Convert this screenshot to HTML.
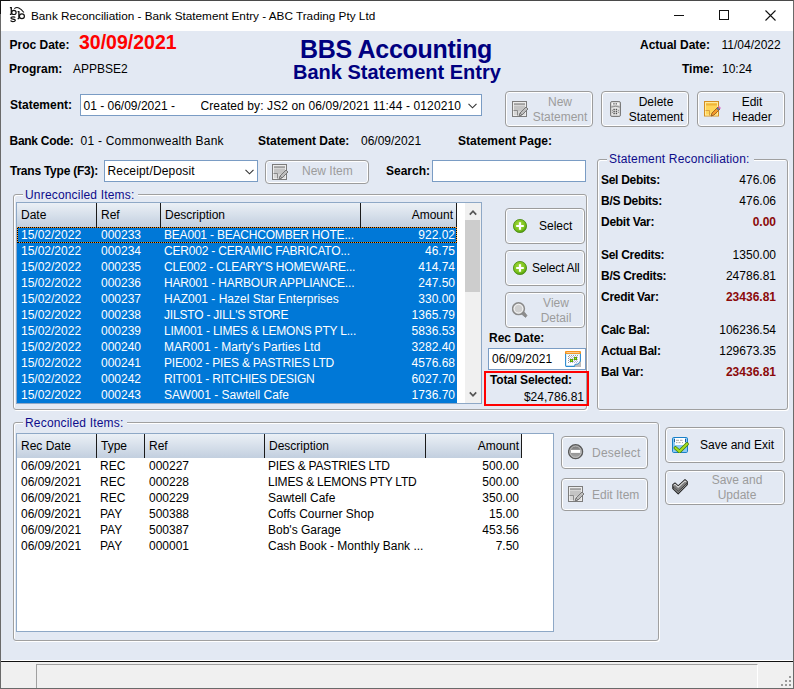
<!DOCTYPE html>
<html><head><meta charset="utf-8">
<style>
*{box-sizing:border-box}
html,body{margin:0;padding:0}
body{width:794px;height:689px;overflow:hidden;position:relative;background:#E3E9F3;font-family:"Liberation Sans",sans-serif;font-size:12px;color:#000}
.a{position:absolute}
.t{position:absolute;white-space:nowrap;line-height:14px}
.b{font-weight:bold}
.ctr{text-align:center}
#win{position:absolute;left:0;top:0;width:794px;height:689px;border:1px solid #6a6a6a;border-top-color:#4a4a4a}
#title{position:absolute;left:0;top:0;width:794px;height:31px;background:#fff}
.btn{position:absolute;border:1px solid #9c9c9c;border-radius:4px;box-shadow:inset 0 0 0 1px #fff}
.dis{color:#9c9c9c}
.grp{position:absolute;border:1px solid #a0a0a0;border-radius:3px;box-shadow:inset 1px 1px 0 #fff,1px 1px 0 #fff}
.glab{position:absolute;color:#0e0c8a;background:#E3E9F3;padding:0 4px 0 2px;letter-spacing:0.18px;line-height:14px;white-space:nowrap}
.inp{position:absolute;background:#fff;border:1px solid #7a9cc4}
.grid{position:absolute;background:#fff;border:1px solid #8ea8c6;overflow:hidden}
.hdr{position:absolute;left:0;top:0;height:24px;background:linear-gradient(#ebf0f6,#c2cfdf)}
.sep{position:absolute;top:0;width:1px;height:24px;background:#1a1a1a}
.row{position:absolute;height:16px;background:#0078d7;color:#fff}
.row2{position:absolute;left:0;height:16px;width:530px}
.cell{position:absolute;white-space:nowrap;line-height:14px}
.r{text-align:right}
.val{position:absolute;right:12px;white-space:nowrap;line-height:14px;text-align:right}
.rl{letter-spacing:-0.28px}
.dr{color:#8b0a0a;font-weight:bold}
</style></head><body>
<div id="title">
  <svg class="a" style="left:0;top:0" width="30" height="30" viewBox="0 0 30 30">
   <g fill="none" stroke="#111">
    <path d="M11.3 7.3 V14.6 M9.9 7.6 H11.8 M9.9 14.4 H11.3" stroke-width="1.3"/>
    <ellipse cx="13.9" cy="12.4" rx="2.2" ry="2.1" stroke-width="1.2"/>
    <path d="M18.9 11.4 V18.8 M17.6 11.7 H19.4 M17.6 18.6 H18.9" stroke-width="1.3"/>
    <ellipse cx="21.9" cy="16.3" rx="2.5" ry="2.4" stroke-width="1.2"/>
    <path d="M15.2 17.6 Q14.9 16.9 13 16.9 Q10.9 16.9 11 18.2 Q11.2 19.1 13 19.2 Q15.4 19.4 15.3 20.5 Q15.1 21.6 12.9 21.6 Q11 21.6 10.6 20.6" stroke-width="1.3"/>
    <path d="M14.3 8.6 Q18.6 5.3 23.9 12.5" stroke-width="1.1"/>
   </g>
  </svg>
  <div class="t" style="left:31px;top:9px;font-size:11.75px">Bank Reconciliation - Bank Statement Entry - ABC Trading Pty Ltd</div>
  <div class="a" style="left:674px;top:15px;width:10px;height:1px;background:#111"></div>
  <div class="a" style="left:719px;top:10px;width:10px;height:10px;border:1px solid #111"></div>
  <svg class="a" style="left:765px;top:10px" width="11" height="11" viewBox="0 0 11 11"><path d="M0.5 0.5 L10.5 10.5 M10.5 0.5 L0.5 10.5" stroke="#111" stroke-width="1.1"/></svg>
</div>

<!-- header -->
<div class="t b" style="left:9.5px;top:38px">Proc Date:</div>
<div class="t b" style="left:79px;top:31px;font-size:19.5px;line-height:22px;color:#f00">30/09/2021</div>
<div class="t b" style="left:9px;top:62px">Program:</div>
<div class="t" style="left:73px;top:62px">APPBSE2</div>
<div class="t b" style="left:300px;top:35px;font-size:25px;line-height:28px;color:#000080;letter-spacing:-0.3px">BBS Accounting</div>
<div class="t b" style="left:293px;top:60px;font-size:20px;line-height:24px;color:#000080">Bank Statement Entry</div>
<div class="t b" style="left:640px;top:38px">Actual Date:</div>
<div class="t" style="left:721.5px;top:38px">11/04/2022</div>
<div class="t b" style="left:682px;top:62px">Time:</div>
<div class="t" style="left:722px;top:62px">10:24</div>

<div class="t b" style="left:10px;top:98px">Statement:</div>
<div class="inp" style="left:80px;top:94px;width:402px;height:22px;overflow:hidden">
  <div class="t" style="left:2.5px;top:4px">01 - 06/09/2021 -</div><div class="t" style="left:119.5px;top:4px;width:260px;overflow:hidden;letter-spacing:0.1px">Created by: JS2 on 06/09/2021 11:44 - 0120210</div>
</div>
<svg class="a" style="left:468px;top:103px" width="9" height="6" viewBox="0 0 9 6"><path d="M0.5 0.8 L4.5 4.8 L8.5 0.8" fill="none" stroke="#333" stroke-width="1.1"/></svg>

<div class="btn" style="left:505px;top:91px;width:88px;height:36px"></div>
<svg class="a" style="left:512px;top:101px" width="16" height="16" viewBox="0 0 16 16">
<rect x="0.5" y="0.5" width="14" height="15" fill="#d6d6d6" stroke="#7c7c7c"/>
<rect x="1.5" y="1.5" width="12" height="13" fill="none" stroke="#ececec"/>
<rect x="2" y="2.3" width="11" height="1.6" fill="#9c9c9c"/>
<rect x="2" y="5" width="11" height="5" fill="#c4c4c4"/>
<path d="M1.5 9.5h4v5" fill="none" stroke="#8a8a8a"/>
<path d="M7 15 L8 12 L14 6 L16 8 L10 14 Z" fill="#bdbdbd" stroke="#6e6e6e" stroke-width="0.9"/>
<path d="M8 12 L10 14" stroke="#6e6e6e" stroke-width="0.8"/>
</svg>
<div class="t dis ctr" style="left:527px;top:95px;width:66px;line-height:15px">New<br>Statement</div>
<div class="btn" style="left:601px;top:91px;width:88px;height:36px"></div>
<svg class="a" style="left:610px;top:101px" width="11" height="16" viewBox="0 0 11 16">
<rect x="0.5" y="0.5" width="10" height="15" rx="1.6" fill="#bdbdbd" stroke="#7a7a7a"/>
<path d="M1.5 1.6 H9.5 V4.8 Q5.5 3.4 1.5 4.8 Z" fill="#f4f4f4"/>
<rect x="3.3" y="2.2" width="1.3" height="1.3" fill="#555"/><rect x="5.6" y="2.2" width="1.3" height="1.3" fill="#555"/>
<path d="M1.5 6.4 Q5.5 4.9 9.5 6.4 V14.6 H1.5 Z" fill="#e6e6e6"/>
<path d="M1.3 6.1 Q5.5 4.5 9.7 6.1" fill="none" stroke="#8c8c8c" stroke-width="0.9"/>
<g fill="#505050">
<rect x="3.4" y="7.8" width="1.4" height="1.4"/><rect x="5.7" y="7.8" width="1.4" height="1.4"/>
<rect x="3.4" y="9.8" width="1.4" height="1.4"/><rect x="5.7" y="9.8" width="1.4" height="1.4"/>
<rect x="3.4" y="11.8" width="1.4" height="1.4"/><rect x="5.7" y="11.8" width="1.4" height="1.4"/>
</g><g fill="#7a7a7a">
<rect x="1.9" y="8.8" width="1" height="1"/><rect x="7.9" y="8.8" width="1" height="1"/>
<rect x="1.9" y="10.8" width="1" height="1"/><rect x="7.9" y="10.8" width="1" height="1"/>
</g></svg>
<div class="t ctr" style="left:623px;top:95px;width:66px;line-height:15px">Delete<br>Statement</div>
<div class="btn" style="left:697px;top:91px;width:88px;height:36px"></div>
<svg class="a" style="left:704px;top:101px" width="17" height="16" viewBox="0 0 17 16">
<rect x="0.5" y="0.5" width="14" height="14.5" fill="#ffd65a" stroke="#d48f22"/>
<rect x="1.5" y="1.5" width="12" height="12.5" fill="none" stroke="#ffeaa0"/>
<rect x="2" y="2.5" width="11" height="2" fill="#f0b43a"/>
<path d="M1.5 9.5h4v5" fill="none" stroke="#d9a040"/>
<path d="M7 15 L8 12 L14 6 L16 8 L10 14 Z" fill="#f59b2b" stroke="#8a5020" stroke-width="0.8"/>
<path d="M13 7 L15 9" stroke="#4b6fb0" stroke-width="1.6"/>
<path d="M14 6 L15 5 L17 7 L16 8 Z" fill="#e070d0"/>
</svg>
<div class="t ctr" style="left:719px;top:95px;width:66px;line-height:15px">Edit<br>Header</div>

<div class="t b" style="left:9.5px;top:134px;letter-spacing:-0.27px">Bank Code:</div>
<div class="t" style="left:80.5px;top:134px;letter-spacing:0.24px">01 - Commonwealth Bank</div>
<div class="t b" style="left:258px;top:134px">Statement Date:</div>
<div class="t" style="left:361px;top:134px">06/09/2021</div>
<div class="t b" style="left:458px;top:134px">Statement Page:</div>

<div class="t b" style="left:10px;top:164px;letter-spacing:-0.24px">Trans Type (F3):</div>
<div class="inp" style="left:104px;top:160px;width:154px;height:22px"></div>
<div class="t" style="left:107.5px;top:164px;letter-spacing:0.17px">Receipt/Deposit</div>
<svg class="a" style="left:244.5px;top:168.5px" width="9" height="6" viewBox="0 0 9 6"><path d="M0.5 0.8 L4.5 4.8 L8.5 0.8" fill="none" stroke="#333" stroke-width="1.1"/></svg>
<div class="btn" style="left:265px;top:160px;width:104px;height:24px"></div>
<svg class="a" style="left:272px;top:164px" width="16" height="16" viewBox="0 0 16 16">
<rect x="0.5" y="0.5" width="14" height="15" fill="#d6d6d6" stroke="#7c7c7c"/>
<rect x="1.5" y="1.5" width="12" height="13" fill="none" stroke="#ececec"/>
<rect x="2" y="2.3" width="11" height="1.6" fill="#9c9c9c"/>
<rect x="2" y="5" width="11" height="5" fill="#c4c4c4"/>
<path d="M1.5 9.5h4v5" fill="none" stroke="#8a8a8a"/>
<path d="M7 15 L8 12 L14 6 L16 8 L10 14 Z" fill="#bdbdbd" stroke="#6e6e6e" stroke-width="0.9"/>
<path d="M8 12 L10 14" stroke="#6e6e6e" stroke-width="0.8"/>
</svg>
<div class="t dis" style="left:302px;top:164px">New Item</div>
<div class="t b" style="left:386px;top:164px">Search:</div>
<div class="inp" style="left:432px;top:160px;width:154px;height:22px"></div>

<!-- Unreconciled group -->
<div class="grp" style="left:13px;top:194px;width:574px;height:216px"></div>
<div class="glab" style="left:23px;top:188px">Unreconciled Items:</div>
<div class="grid" style="left:16px;top:202px;width:466px;height:202px">
  <div class="hdr" style="width:440px"></div>
  <div class="sep" style="left:79px"></div>
  <div class="sep" style="left:143px"></div>
  <div class="sep" style="left:343px"></div>
  <div class="sep" style="left:439px"></div>
  <div class="cell" style="left:4px;top:5px">Date</div>
  <div class="cell" style="left:84px;top:5px">Ref</div>
  <div class="cell" style="left:148px;top:5px">Description</div>
  <div class="cell r" style="left:340px;width:96px;top:5px">Amount</div>
  <div class="row" style="left:0;top:24px;width:440px"><div class="cell" style="left:4px;top:1px">15/02/2022</div><div class="cell" style="left:84px;top:1px">000233</div><div class="cell" style="left:147px;top:1px;letter-spacing:-0.2px">BEA001 - BEACHCOMBER HOTE...</div><div class="cell r" style="right:2px;top:1px">922.02</div></div>
<div class="row" style="left:0;top:40px;width:440px"><div class="cell" style="left:4px;top:1px">15/02/2022</div><div class="cell" style="left:84px;top:1px">000234</div><div class="cell" style="left:147px;top:1px;letter-spacing:-0.2px">CER002 - CERAMIC FABRICATO...</div><div class="cell r" style="right:2px;top:1px">46.75</div></div>
<div class="row" style="left:0;top:56px;width:440px"><div class="cell" style="left:4px;top:1px">15/02/2022</div><div class="cell" style="left:84px;top:1px">000235</div><div class="cell" style="left:147px;top:1px;letter-spacing:-0.2px">CLE002 - CLEARY'S HOMEWARE...</div><div class="cell r" style="right:2px;top:1px">414.74</div></div>
<div class="row" style="left:0;top:72px;width:440px"><div class="cell" style="left:4px;top:1px">15/02/2022</div><div class="cell" style="left:84px;top:1px">000236</div><div class="cell" style="left:147px;top:1px;letter-spacing:-0.2px">HAR001 - HARBOUR APPLIANCE...</div><div class="cell r" style="right:2px;top:1px">247.50</div></div>
<div class="row" style="left:0;top:88px;width:440px"><div class="cell" style="left:4px;top:1px">15/02/2022</div><div class="cell" style="left:84px;top:1px">000237</div><div class="cell" style="left:147px;top:1px">HAZ001 - Hazel Star Enterprises</div><div class="cell r" style="right:2px;top:1px">330.00</div></div>
<div class="row" style="left:0;top:104px;width:440px"><div class="cell" style="left:4px;top:1px">15/02/2022</div><div class="cell" style="left:84px;top:1px">000238</div><div class="cell" style="left:147px;top:1px;letter-spacing:-0.2px">JILSTO - JILL'S STORE</div><div class="cell r" style="right:2px;top:1px">1365.79</div></div>
<div class="row" style="left:0;top:120px;width:440px"><div class="cell" style="left:4px;top:1px">15/02/2022</div><div class="cell" style="left:84px;top:1px">000239</div><div class="cell" style="left:147px;top:1px;letter-spacing:-0.2px">LIM001 - LIMES &amp; LEMONS PTY L...</div><div class="cell r" style="right:2px;top:1px">5836.53</div></div>
<div class="row" style="left:0;top:136px;width:440px"><div class="cell" style="left:4px;top:1px">15/02/2022</div><div class="cell" style="left:84px;top:1px">000240</div><div class="cell" style="left:147px;top:1px">MAR001 - Marty's Parties Ltd</div><div class="cell r" style="right:2px;top:1px">3282.40</div></div>
<div class="row" style="left:0;top:152px;width:440px"><div class="cell" style="left:4px;top:1px">15/02/2022</div><div class="cell" style="left:84px;top:1px">000241</div><div class="cell" style="left:147px;top:1px;letter-spacing:-0.2px">PIE002 - PIES &amp; PASTRIES LTD</div><div class="cell r" style="right:2px;top:1px">4576.68</div></div>
<div class="row" style="left:0;top:168px;width:440px"><div class="cell" style="left:4px;top:1px">15/02/2022</div><div class="cell" style="left:84px;top:1px">000242</div><div class="cell" style="left:147px;top:1px;letter-spacing:-0.2px">RIT001 - RITCHIES DESIGN</div><div class="cell r" style="right:2px;top:1px">6027.70</div></div>
<div class="row" style="left:0;top:184px;width:440px"><div class="cell" style="left:4px;top:1px">15/02/2022</div><div class="cell" style="left:84px;top:1px">000243</div><div class="cell" style="left:147px;top:1px">SAW001 - Sawtell Cafe</div><div class="cell r" style="right:2px;top:1px">1736.70</div></div>
  <div class="a" style="left:0;top:24px;width:440px;height:1px;background:repeating-linear-gradient(90deg,#f7931e 0 1px,#000 1px 2px)"></div>
  <div class="a" style="left:0;top:39px;width:440px;height:1px;background:repeating-linear-gradient(90deg,#f7931e 0 1px,#000 1px 2px)"></div>
  <div class="a" style="left:0;top:24px;width:1px;height:16px;background:repeating-linear-gradient(180deg,#f7931e 0 1px,#000 1px 2px)"></div>
  <div class="a" style="left:439px;top:24px;width:1px;height:16px;background:repeating-linear-gradient(180deg,#f7931e 0 1px,#000 1px 2px)"></div>
  <!-- scrollbar -->
  <div class="a" style="left:448px;top:0;width:16px;height:200px;background:#f0f0f0"></div>
  <div class="a" style="left:448px;top:17px;width:15px;height:72px;background:#cdcdcd"></div>
  <svg class="a" style="left:452px;top:6px" width="8" height="7" viewBox="0 0 8 7"><path d="M0.8 5.6 L4 2.2 L7.2 5.6" fill="none" stroke="#555" stroke-width="1.7"/></svg>
  <svg class="a" style="left:452px;top:188px" width="8" height="7" viewBox="0 0 8 7"><path d="M0.8 1.4 L4 4.8 L7.2 1.4" fill="none" stroke="#555" stroke-width="1.7"/></svg>
</div>

<div class="btn" style="left:505px;top:208px;width:80px;height:36px"></div>
<svg class="a" style="left:513px;top:219px" width="15" height="15" viewBox="0 0 15 15">
<defs><radialGradient id="gp1" cx="0.45" cy="0.4" r="0.6"><stop offset="0" stop-color="#a8dc3c"/><stop offset="0.7" stop-color="#7cc21e"/><stop offset="1" stop-color="#4c9a0c"/></radialGradient></defs>
<circle cx="7" cy="7" r="6.6" fill="url(#gp1)" stroke="#4a8a10" stroke-width="0.8"/>
<path d="M3.2 7h7.6M7 3.2v7.6" stroke="#fff" stroke-width="2.2"/>
</svg>
<div class="t" style="left:539px;top:219px">Select</div>
<div class="btn" style="left:505px;top:250px;width:80px;height:36px"></div>
<svg class="a" style="left:513px;top:261px" width="15" height="15" viewBox="0 0 15 15">
<defs><radialGradient id="gp2" cx="0.45" cy="0.4" r="0.6"><stop offset="0" stop-color="#a8dc3c"/><stop offset="0.7" stop-color="#7cc21e"/><stop offset="1" stop-color="#4c9a0c"/></radialGradient></defs>
<circle cx="7" cy="7" r="6.6" fill="url(#gp2)" stroke="#4a8a10" stroke-width="0.8"/>
<path d="M3.2 7h7.6M7 3.2v7.6" stroke="#fff" stroke-width="2.2"/>
</svg>
<div class="t" style="left:532px;top:261px;letter-spacing:-0.2px">Select All</div>
<div class="btn" style="left:505px;top:292px;width:80px;height:36px"></div>
<svg class="a" style="left:512px;top:302px" width="16" height="17" viewBox="0 0 16 17">
<path d="M9.2 11.8 L11.8 9.4 L15 13.4 L13.6 15.4 Z" fill="#8c8c8c" stroke="#7a7a7a" stroke-width="0.6" stroke-linejoin="round"/>
<circle cx="6.5" cy="6.7" r="5.9" fill="#d8d8d8" stroke="#8a8a8a" stroke-width="1.5"/>
<circle cx="6.5" cy="6.7" r="4.3" fill="#cfcfcf" stroke="#f4f4f4" stroke-width="1"/>
</svg>
<div class="t dis ctr" style="left:527px;top:296px;width:58px;line-height:15px">View<br>Detail</div>

<div class="t b" style="left:489px;top:331px">Rec Date:</div>
<div class="inp" style="left:488px;top:348px;width:98px;height:22px"></div>
<div class="t" style="left:492px;top:352px">06/09/2021</div>
<svg class="a" style="left:565px;top:351px" width="16" height="16" viewBox="0 0 16 16">
<rect x="0.6" y="1" width="14.8" height="14.4" rx="1.2" fill="#fff" stroke="#2a8ad0" stroke-width="1.1"/>
<rect x="0" y="0" width="16" height="3" rx="1" fill="#f7941d"/>
<rect x="1.5" y="1.2" width="13" height="0.9" fill="#ffd9a8"/>
<rect x="1.1" y="3" width="13.8" height="1" fill="#d8f4ff"/>
<rect x="4" y="4" width="1" height="1" fill="#9a9a9a"/><rect x="6" y="4" width="1" height="1" fill="#9a9a9a"/><rect x="8" y="4" width="1" height="1" fill="#9a9a9a"/><rect x="10" y="4" width="1" height="1" fill="#9a9a9a"/><rect x="12" y="4" width="1" height="1" fill="#9a9a9a"/><rect x="3" y="5" width="1" height="1" fill="#9a9a9a"/><rect x="5" y="5" width="1" height="1" fill="#b8b8d8"/><rect x="7" y="5" width="1" height="1" fill="#b8b8d8"/><rect x="9" y="5" width="1" height="1" fill="#b8b8d8"/><rect x="11" y="5" width="1" height="1" fill="#b8b8d8"/><rect x="4" y="6" width="1" height="1" fill="#b8b8d8"/><rect x="6" y="6" width="1" height="1" fill="#b8b8d8"/><rect x="8" y="6" width="1" height="1" fill="#b8b8d8"/><rect x="10" y="6" width="1" height="1" fill="#b8b8d8"/><rect x="12" y="6" width="1" height="1" fill="#b8b8d8"/><rect x="3" y="7" width="1" height="1" fill="#9a9a9a"/><rect x="5" y="7" width="1" height="1" fill="#b8b8d8"/><rect x="7" y="7" width="1" height="1" fill="#b8b8d8"/><rect x="9" y="7" width="1" height="1" fill="#b8b8d8"/><rect x="11" y="7" width="1" height="1" fill="#b8b8d8"/><rect x="4" y="8" width="1" height="1" fill="#b8b8d8"/><rect x="6" y="8" width="1" height="1" fill="#b8b8d8"/><rect x="8" y="8" width="1" height="1" fill="#b8b8d8"/><rect x="10" y="8" width="1" height="1" fill="#b8b8d8"/><rect x="12" y="8" width="1" height="1" fill="#b8b8d8"/><rect x="3" y="9" width="1" height="1" fill="#9a9a9a"/><rect x="5" y="9" width="1" height="1" fill="#b8b8d8"/><rect x="7" y="9" width="1" height="1" fill="#b8b8d8"/><rect x="9" y="9" width="1" height="1" fill="#b8b8d8"/><rect x="11" y="9" width="1" height="1" fill="#b8b8d8"/><rect x="4" y="10" width="1" height="1" fill="#b8b8d8"/><rect x="6" y="10" width="1" height="1" fill="#b8b8d8"/><rect x="8" y="10" width="1" height="1" fill="#b8b8d8"/><rect x="10" y="10" width="1" height="1" fill="#b8b8d8"/><rect x="12" y="10" width="1" height="1" fill="#b8b8d8"/><rect x="3" y="11" width="1" height="1" fill="#9a9a9a"/><rect x="5" y="11" width="1" height="1" fill="#b8b8d8"/><rect x="7" y="11" width="1" height="1" fill="#b8b8d8"/><rect x="9" y="11" width="1" height="1" fill="#b8b8d8"/><rect x="11" y="11" width="1" height="1" fill="#b8b8d8"/>
<rect x="5" y="8" width="3" height="3" fill="#5aa800"/><rect x="6" y="9" width="1" height="1" fill="#9bd84a"/>
<rect x="9" y="6" width="3" height="3" fill="#5aa800"/><rect x="10" y="7" width="1" height="1" fill="#9bd84a"/>
<path d="M9.5 16 L9.5 13.5 L13 13 L16 9.5 L16 16 Z" fill="#bcbcbc"/>
<path d="M9.5 15.6 L10 13.4 L13 13 L15.5 10" fill="none" stroke="#2a8ad0" stroke-width="0.9"/>
</svg>
<div class="a" style="left:484px;top:371px;width:105px;height:35px;border:2px solid #f00"></div>
<div class="t b" style="left:490px;top:373px;letter-spacing:-0.17px">Total Selected:</div>
<div class="t" style="left:490px;top:390px;width:94px;text-align:right">$24,786.81</div>

<!-- Statement reconciliation group -->
<div class="grp" style="left:597px;top:159px;width:191px;height:251px"></div>
<div class="glab" style="left:607px;top:152px">Statement Reconciliation:</div>
<div class="a" style="left:597px;top:159px;width:191px;height:251px">
  <div class="t b rl" style="left:4px;top:14px">Sel Debits:</div><div class="val" style="top:14px">476.06</div>
  <div class="t b rl" style="left:4px;top:35px">B/S Debits:</div><div class="val" style="top:35px">476.06</div>
  <div class="t b rl" style="left:4px;top:56px">Debit Var:</div><div class="val dr" style="top:56px">0.00</div>
  <div class="t b rl" style="left:4px;top:89px">Sel Credits:</div><div class="val" style="top:89px">1350.00</div>
  <div class="t b rl" style="left:4px;top:110px">B/S Credits:</div><div class="val" style="top:110px">24786.81</div>
  <div class="t b rl" style="left:4px;top:131px">Credit Var:</div><div class="val dr" style="top:131px">23436.81</div>
  <div class="t b rl" style="left:4px;top:164px">Calc Bal:</div><div class="val" style="top:164px">106236.54</div>
  <div class="t b rl" style="left:4px;top:185px">Actual Bal:</div><div class="val" style="top:185px">129673.35</div>
  <div class="t b rl" style="left:4px;top:206px">Bal Var:</div><div class="val dr" style="top:206px">23436.81</div>
</div>

<!-- Reconciled group -->
<div class="grp" style="left:13px;top:422px;width:646px;height:219px"></div>
<div class="glab" style="left:23px;top:416px">Reconciled Items:</div>
<div class="grid" style="left:16px;top:433px;width:538px;height:199px">
  <div class="hdr" style="width:505px"></div>
  <div class="sep" style="left:79px"></div>
  <div class="sep" style="left:127px"></div>
  <div class="sep" style="left:247px"></div>
  <div class="sep" style="left:408px"></div>
  <div class="sep" style="left:504px"></div>
  <div class="cell" style="left:4px;top:5px">Rec Date</div>
  <div class="cell" style="left:84px;top:5px">Type</div>
  <div class="cell" style="left:132px;top:5px">Ref</div>
  <div class="cell" style="left:252px;top:5px">Description</div>
  <div class="cell r" style="left:410px;width:92px;top:5px">Amount</div>
  <div class="row2" style="top:24px"><div class="cell" style="left:4px;top:1px">06/09/2021</div><div class="cell" style="left:83px;top:1px">REC</div><div class="cell" style="left:132px;top:1px">000227</div><div class="cell" style="left:251px;top:1px;letter-spacing:-0.2px">PIES &amp; PASTRIES LTD</div><div class="cell r" style="left:420px;width:82px;top:1px">500.00</div></div>
<div class="row2" style="top:40px"><div class="cell" style="left:4px;top:1px">06/09/2021</div><div class="cell" style="left:83px;top:1px">REC</div><div class="cell" style="left:132px;top:1px">000228</div><div class="cell" style="left:251px;top:1px;letter-spacing:-0.2px">LIMES &amp; LEMONS PTY LTD</div><div class="cell r" style="left:420px;width:82px;top:1px">500.00</div></div>
<div class="row2" style="top:56px"><div class="cell" style="left:4px;top:1px">06/09/2021</div><div class="cell" style="left:83px;top:1px">REC</div><div class="cell" style="left:132px;top:1px">000229</div><div class="cell" style="left:251px;top:1px">Sawtell Cafe</div><div class="cell r" style="left:420px;width:82px;top:1px">350.00</div></div>
<div class="row2" style="top:72px"><div class="cell" style="left:4px;top:1px">06/09/2021</div><div class="cell" style="left:83px;top:1px">PAY</div><div class="cell" style="left:132px;top:1px">500388</div><div class="cell" style="left:251px;top:1px">Coffs Courner Shop</div><div class="cell r" style="left:420px;width:82px;top:1px">15.00</div></div>
<div class="row2" style="top:88px"><div class="cell" style="left:4px;top:1px">06/09/2021</div><div class="cell" style="left:83px;top:1px">PAY</div><div class="cell" style="left:132px;top:1px">500387</div><div class="cell" style="left:251px;top:1px">Bob's Garage</div><div class="cell r" style="left:420px;width:82px;top:1px">453.56</div></div>
<div class="row2" style="top:104px"><div class="cell" style="left:4px;top:1px">06/09/2021</div><div class="cell" style="left:83px;top:1px">PAY</div><div class="cell" style="left:132px;top:1px">000001</div><div class="cell" style="left:251px;top:1px">Cash Book - Monthly Bank ...</div><div class="cell r" style="left:420px;width:82px;top:1px">7.50</div></div>
</div>

<div class="btn" style="left:561px;top:436px;width:87px;height:33px"></div>
<svg class="a" style="left:568px;top:444px" width="16" height="16" viewBox="0 0 16 16">
<defs><linearGradient id="gm" x1="0" y1="0" x2="0" y2="1"><stop offset="0" stop-color="#777"/><stop offset="1" stop-color="#ababab"/></linearGradient></defs>
<circle cx="7.6" cy="7.7" r="7" fill="url(#gm)" stroke="#5a5a5a" stroke-width="1.3"/>
<circle cx="7.6" cy="7.7" r="5.7" fill="none" stroke="#c4c4c4" stroke-width="0.9"/>
<rect x="3" y="5.9" width="9.3" height="3" fill="#fff"/>
</svg>
<div class="t dis" style="left:592px;top:446px;letter-spacing:0.25px">Deselect</div>
<div class="btn" style="left:561px;top:478px;width:87px;height:33px"></div>
<svg class="a" style="left:568px;top:486px" width="16" height="16" viewBox="0 0 16 16">
<rect x="0.5" y="0.5" width="14" height="15" fill="#d6d6d6" stroke="#7c7c7c"/>
<rect x="1.5" y="1.5" width="12" height="13" fill="none" stroke="#ececec"/>
<rect x="2" y="2.3" width="11" height="1.6" fill="#9c9c9c"/>
<rect x="2" y="5" width="11" height="5" fill="#c4c4c4"/>
<path d="M1.5 9.5h4v5" fill="none" stroke="#8a8a8a"/>
<path d="M7 15 L8 12 L14 6 L16 8 L10 14 Z" fill="#bdbdbd" stroke="#6e6e6e" stroke-width="0.9"/>
<path d="M8 12 L10 14" stroke="#6e6e6e" stroke-width="0.8"/>
</svg>
<div class="t dis" style="left:592px;top:488px">Edit Item</div>

<div class="btn" style="left:665px;top:427px;width:120px;height:36px"></div>
<svg class="a" style="left:672px;top:437px" width="17" height="16" viewBox="0 0 17 16">
<rect x="0.5" y="0.5" width="15" height="15" rx="1.2" fill="#8ccaf4" stroke="#1a80c8"/>
<rect x="3" y="1" width="10" height="7" fill="#fff"/>
<rect x="2" y="2" width="1" height="3" fill="#1e5a9a"/><rect x="13" y="2" width="1" height="3" fill="#1e5a9a"/>
<g fill="#9a9a9a"><rect x="4" y="2.8" width="3" height="0.9"/><rect x="8" y="2.8" width="2.5" height="0.9"/><rect x="4" y="5.2" width="1.5" height="0.9"/><rect x="6.5" y="5.2" width="2" height="0.9"/><rect x="10" y="5.2" width="1" height="0.9"/></g>
<path d="M3.5 11 L7.5 14.5 L15 7" fill="none" stroke="#3f7a0a" stroke-width="3.6" stroke-linejoin="round" stroke-linecap="round"/>
<path d="M3.5 11 L7.5 14.5 L15 7" fill="none" stroke="#a6dc1e" stroke-width="2.2" stroke-linejoin="round" stroke-linecap="round"/>
</svg>
<div class="t" style="left:700px;top:438px">Save and Exit</div>
<div class="btn" style="left:665px;top:470px;width:120px;height:35px"></div>
<svg class="a" style="left:672px;top:479px" width="16" height="16" viewBox="0 0 16 16">
<path d="M0.8 5.8 L3 4 L6.2 6.8 L13 0.6 L15.3 2.6 L15.3 5.6 L6.2 14.8 L0.8 9.6 Z" fill="#7e7e7e" stroke="#262626" stroke-width="1.1" stroke-linejoin="round"/>
<path d="M1.6 6.4 L3 5.2 L6.2 8.2 L13 1.9 L14.4 3.1" fill="none" stroke="#dadada" stroke-width="1.1"/>
<path d="M1 8 L6.2 12.5 L15.2 4.2" fill="none" stroke="#2e2e2e" stroke-width="0.9"/>
<path d="M1.8 9.3 L6.2 13.4 L14.6 5.6" fill="none" stroke="#a8a8a8" stroke-width="0.7"/>
</svg>
<div class="t dis ctr" style="left:695px;top:473px;width:84px;line-height:15px">Save and<br>Update</div>

<!-- status bar -->
<div class="a" style="left:0;top:660px;width:794px;height:1px;background:#fff"></div>
<div class="a" style="left:0;top:661px;width:794px;height:1px;background:#111"></div>
<div class="a" style="left:0;top:662px;width:794px;height:27px;background:#f0f0f0"></div>
<div class="a" style="left:36px;top:664px;width:722px;height:24px;border-top:1px solid #a0a0a0;border-left:1px solid #a0a0a0;border-right:1px solid #fff"></div>
<svg class="a" style="left:781px;top:675px" width="12" height="12" viewBox="0 0 12 12"><g fill="#9a9a9a"><rect x="8" y="1" width="2" height="2"/><rect x="4" y="5" width="2" height="2"/><rect x="8" y="5" width="2" height="2"/><rect x="0" y="9" width="2" height="2"/><rect x="4" y="9" width="2" height="2"/><rect x="8" y="9" width="2" height="2"/></g></svg>

<div id="win"></div>
<div class="a" style="left:0;top:0;width:1px;height:14px;background:#111"></div><div class="a" style="left:0;top:0;width:10px;height:1px;background:#111"></div>
</body></html>
